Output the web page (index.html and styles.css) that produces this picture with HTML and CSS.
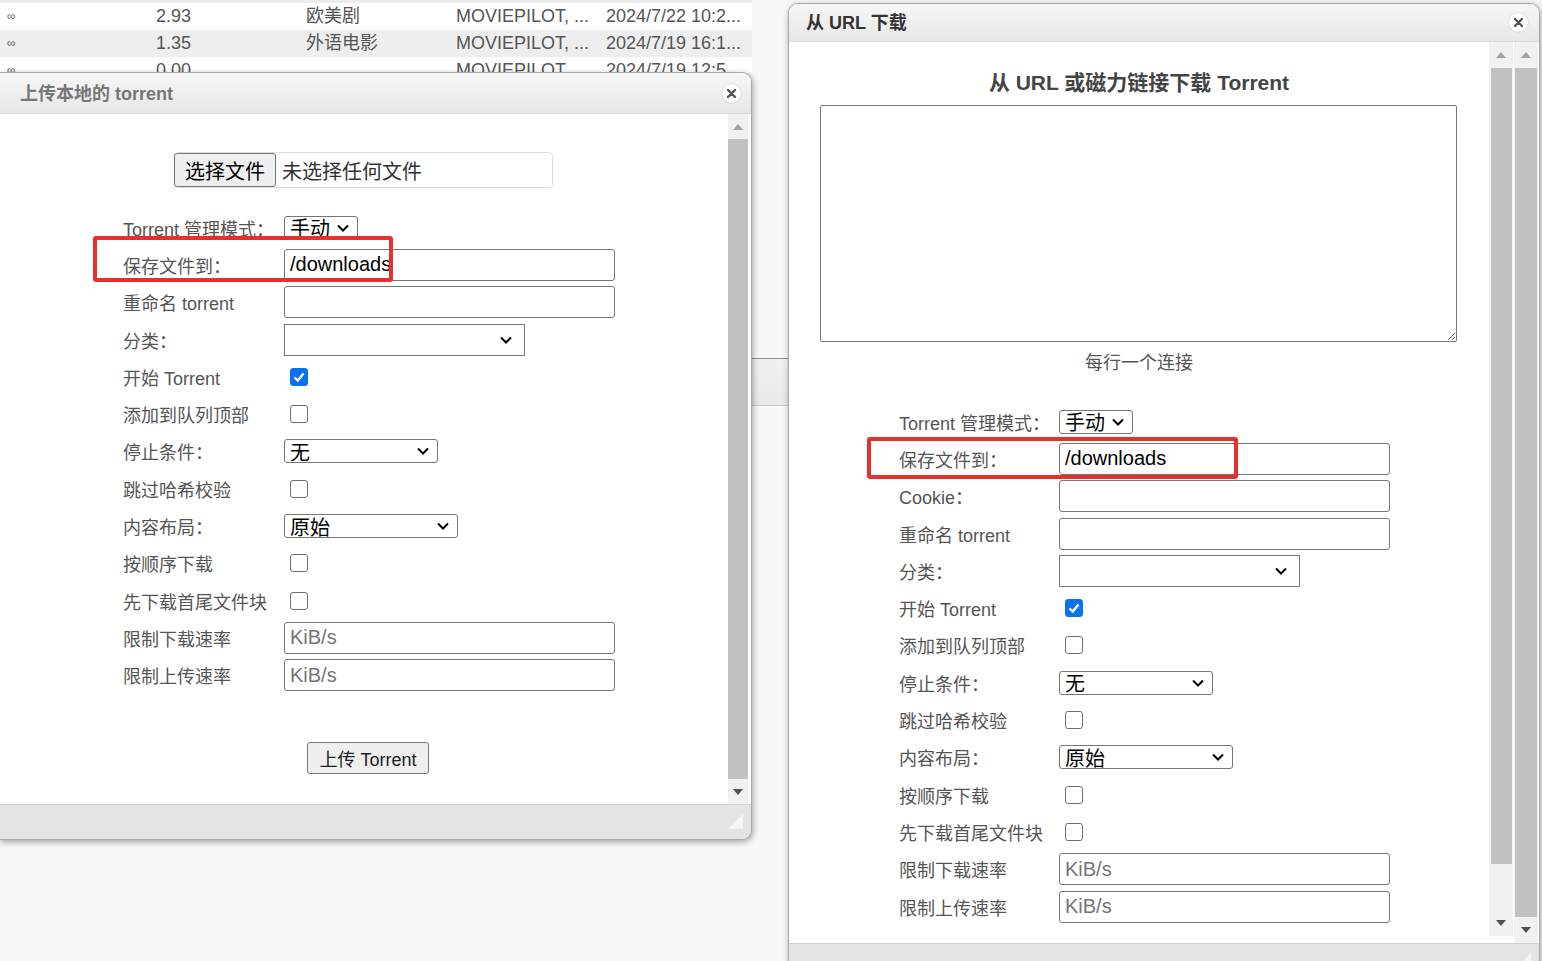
FILE: index.html
```html
<!DOCTYPE html>
<html lang="zh-CN">
<head>
  <meta charset="UTF-8" />
  <meta name="viewport" content="width=device-width, initial-scale=1" />
  <title>qBittorrent Web UI</title>
  <link rel="stylesheet" href="styles.css">
</head>
<body>
  <div class="left-col">
    <!-- daftar torrent di belakang dialog -->
    <div class="torrent-list">
      <div class="trow"><span class="inf">∞</span><span>2.93</span><span>欧美剧</span><span>MOVIEPILOT, ...</span><span>2024/7/22 10:2...</span></div>
      <div class="trow"><span class="inf">∞</span><span>1.35</span><span>外语电影</span><span>MOVIEPILOT, ...</span><span>2024/7/19 16:1...</span></div>
      <div class="trow"><span class="inf">∞</span><span>0.00</span><span></span><span>MOVIEPILOT, ...</span><span>2024/7/19 12:5...</span></div>
    </div>

    <div class="dialog dlg-upload">
      <div class="dlg-title">
        <span>上传本地的 torrent</span>
        <span class="close"><svg width="9" height="9" viewBox="0 0 9 9"><path d="M1 1L8 8M8 1L1 8" stroke="#555" stroke-width="2.4" stroke-linecap="round"/></svg></span>
      </div>
      <div class="dlg-body">
        <div class="dlg-main upload-main">
          <div class="file-pick">
            <button class="btn-file">选择文件</button>
            <span>未选择任何文件</span>
          </div>

          <div class="form">
            <div class="row"><label>Torrent 管理模式：</label><div class="sel w-mode"><span>手动</span><svg width="12" height="8" viewBox="0 0 12 8"><polyline points="1,1.5 6,6.5 11,1.5" fill="none" stroke="#000" stroke-width="2"/></svg></div></div>
            <div class="row"><label>保存文件到：</label><input class="txt" type="text" value="/downloads"></div>
            <div class="row"><label>重命名 torrent</label><input class="txt" type="text"></div>
            <div class="row"><label>分类：</label><div class="sel big w-cat"><span></span><svg width="12" height="8" viewBox="0 0 12 8"><polyline points="1,1.5 6,6.5 11,1.5" fill="none" stroke="#000" stroke-width="2"/></svg></div></div>
            <div class="row"><label>开始 Torrent</label><span class="cb on"><svg width="14" height="14" viewBox="0 0 14 14"><polyline points="2.5,7.5 5.8,10.6 11.5,3.5" fill="none" stroke="#fff" stroke-width="2.4"/></svg></span></div>
            <div class="row"><label>添加到队列顶部</label><span class="cb"></span></div>
            <div class="row"><label>停止条件：</label><div class="sel w-stop"><span>无</span><svg width="12" height="8" viewBox="0 0 12 8"><polyline points="1,1.5 6,6.5 11,1.5" fill="none" stroke="#000" stroke-width="2"/></svg></div></div>
            <div class="row"><label>跳过哈希校验</label><span class="cb"></span></div>
            <div class="row"><label>内容布局：</label><div class="sel w-layout"><span>原始</span><svg width="12" height="8" viewBox="0 0 12 8"><polyline points="1,1.5 6,6.5 11,1.5" fill="none" stroke="#000" stroke-width="2"/></svg></div></div>
            <div class="row"><label>按顺序下载</label><span class="cb"></span></div>
            <div class="row"><label>先下载首尾文件块</label><span class="cb"></span></div>
            <div class="row"><label>限制下载速率</label><input class="txt" type="text" placeholder="KiB/s"></div>
            <div class="row"><label>限制上传速率</label><input class="txt" type="text" placeholder="KiB/s"></div>
          </div>

          <button class="btn-upload">上传 Torrent</button>
        </div>
        <div class="vscroll sb-left">
          <span class="arr up"></span>
          <div class="thumb"></div>
          <span class="arr down"></span>
        </div>
        <div class="mark mark-left"></div>
      </div>
      <div class="dlg-foot"><span class="grip"></span></div>
    </div>
  </div>

  <div class="mid-col"><div class="band"></div></div>

  <div class="dialog dlg-url">
    <div class="dlg-title">
      <span>从 URL 下载</span>
      <span class="close"><svg width="9" height="9" viewBox="0 0 9 9"><path d="M1 1L8 8M8 1L1 8" stroke="#555" stroke-width="2.4" stroke-linecap="round"/></svg></span>
    </div>
    <div class="dlg-body">
      <div class="dlg-main url-main">
        <h2 class="url-head">从 URL 或磁力链接下载 Torrent</h2>
        <textarea class="urls"></textarea>
        <p class="hint">每行一个连接</p>

        <div class="form">
          <div class="row"><label>Torrent 管理模式：</label><div class="sel w-mode"><span>手动</span><svg width="12" height="8" viewBox="0 0 12 8"><polyline points="1,1.5 6,6.5 11,1.5" fill="none" stroke="#000" stroke-width="2"/></svg></div></div>
          <div class="row"><label>保存文件到：</label><input class="txt" type="text" value="/downloads"></div>
          <div class="row"><label>Cookie：</label><input class="txt" type="text"></div>
          <div class="row"><label>重命名 torrent</label><input class="txt" type="text"></div>
          <div class="row"><label>分类：</label><div class="sel big w-cat"><span></span><svg width="12" height="8" viewBox="0 0 12 8"><polyline points="1,1.5 6,6.5 11,1.5" fill="none" stroke="#000" stroke-width="2"/></svg></div></div>
          <div class="row"><label>开始 Torrent</label><span class="cb on"><svg width="14" height="14" viewBox="0 0 14 14"><polyline points="2.5,7.5 5.8,10.6 11.5,3.5" fill="none" stroke="#fff" stroke-width="2.4"/></svg></span></div>
          <div class="row"><label>添加到队列顶部</label><span class="cb"></span></div>
          <div class="row"><label>停止条件：</label><div class="sel w-stop"><span>无</span><svg width="12" height="8" viewBox="0 0 12 8"><polyline points="1,1.5 6,6.5 11,1.5" fill="none" stroke="#000" stroke-width="2"/></svg></div></div>
          <div class="row"><label>跳过哈希校验</label><span class="cb"></span></div>
          <div class="row"><label>内容布局：</label><div class="sel w-layout"><span>原始</span><svg width="12" height="8" viewBox="0 0 12 8"><polyline points="1,1.5 6,6.5 11,1.5" fill="none" stroke="#000" stroke-width="2"/></svg></div></div>
          <div class="row"><label>按顺序下载</label><span class="cb"></span></div>
          <div class="row"><label>先下载首尾文件块</label><span class="cb"></span></div>
          <div class="row"><label>限制下载速率</label><input class="txt" type="text" placeholder="KiB/s"></div>
          <div class="row"><label>限制上传速率</label><input class="txt" type="text" placeholder="KiB/s"></div>
        </div>
      </div>
      <div class="vscroll sb-inner">
        <span class="arr up"></span>
        <div class="thumb"></div>
        <div class="fill"></div>
        <span class="arr down"></span>
      </div>
      <div class="vscroll sb-outer">
        <span class="arr up"></span>
        <div class="thumb"></div>
        <span class="arr down"></span>
      </div>
      <div class="mark mark-right"></div>
    </div>
    <div class="dlg-foot"><span class="grip"></span></div>
  </div>
</body>
</html>
```

FILE: styles.css
```css
* {
  box-sizing: border-box;
}

html, body {
  margin: 0;
}

body {
  width: 1542px;
  height: 961px;
  overflow: hidden;
  display: flex;
  align-items: flex-start;
  background: #f7f7f7;
  font-family: "Liberation Sans", "Noto Sans CJK SC", Arial, sans-serif;
  color: #555;
}

/* kolom kiri: daftar + dialog upload */
.left-col {
  width: 752px;
  flex: none;
}

.torrent-list {
  height: 72px;
  overflow: hidden;
  border-top: 3px solid #ececec;
  background: #fff;
}

.trow {
  display: grid;
  grid-template-columns: 156px 150px 150px 150px 146px;
  height: 27px;
  line-height: 27px;
  font-size: 18px;
  color: #555;
  white-space: nowrap;
}

.trow span {
  overflow: hidden;
}

.trow:nth-child(even) {
  background: #eee;
}

.trow .inf {
  padding-left: 7px;
  font-size: 12px;
  color: #666;
}

.mid-col {
  width: 36px;
  flex: none;
  padding-top: 358px;
}

.band {
  height: 48px;
  border-top: 1px solid #8f8f8f;
  border-bottom: 1px solid #c8c8c8;
  background: linear-gradient(#f1f1f1, #e9e9e9);
}

/* dialog */
.dialog {
  background: #fff;
  border: 1px solid #a8a8a8;
  box-shadow: 1px 2px 6px rgba(0, 0, 0, 0.35);
  display: flex;
  flex-direction: column;
  overflow: hidden;
  position: relative;
  z-index: 2;
}

.dlg-upload {
  width: 752px;
  border-left: 0;
  border-radius: 0 10px 10px 0;
}

.dlg-url {
  width: 752px;
  height: 975px;
  flex: none;
  margin-top: 3px;
  border-radius: 10px 10px 0 0;
}

.dlg-title {
  flex: none;
  display: flex;
  align-items: center;
  justify-content: space-between;
  background: linear-gradient(#f7f7f7, #e7e7e7);
  border-bottom: 1px solid #d8d8d8;
  font-weight: bold;
}

.dlg-title > span:first-child {
  padding-bottom: 3px;
}

.dlg-upload .dlg-title {
  height: 41px;
  padding: 0 10px 0 20px;
  font-size: 18px;
  color: #777;
}

.dlg-url .dlg-title {
  height: 38px;
  padding: 0 11px 0 17px;
  font-size: 18px;
  color: #333;
}

.close {
  width: 19px;
  height: 19px;
  border-radius: 50%;
  background: #fff;
  display: flex;
  align-items: center;
  justify-content: center;
  box-shadow: 0 0 2px rgba(0, 0, 0, 0.2);
}

.dlg-body {
  flex: none;
  display: flex;
  position: relative;
}

.dlg-upload .dlg-body {
  height: 690px;
  padding-right: 3px;
}

.dlg-url .dlg-body {
  height: 901px;
  padding-right: 1px;
}

.dlg-main {
  flex: 1;
  overflow: hidden;
}

/* scrollbar */
.vscroll {
  flex: none;
  display: flex;
  flex-direction: column;
  background: #f1f1f1;
}

.arr {
  flex: none;
  height: 25px;
  display: flex;
  align-items: center;
  justify-content: center;
}

.arr::before {
  content: "";
  border-left: 5px solid transparent;
  border-right: 5px solid transparent;
}

.arr.up::before {
  border-bottom: 6px solid #a3a3a3;
}

.arr.down::before {
  border-top: 6px solid #505050;
}

.thumb {
  background: #c1c1c1;
}

.fill {
  flex: 1;
}

.sb-left {
  width: 20px;
}

.sb-left .thumb {
  height: 640px;
}

.sb-inner {
  width: 24px;
  margin-bottom: 7px;
}

.sb-inner .arr {
  height: 26px;
}

.sb-inner .thumb {
  height: 796px;
  margin: 0 1px 0 2px;
}

.sb-outer {
  width: 24px;
  margin-left: 1px;
}

.sb-outer .arr {
  height: 26px;
}

.sb-outer .thumb {
  height: 849px;
  margin: 0 1px 0 1px;
}

.dlg-foot {
  flex: none;
  height: 35px;
  background: #e4e4e4;
  border-top: 1px solid #d2d2d2;
  display: flex;
  justify-content: flex-end;
  align-items: flex-end;
  padding: 0 8px 10px 0;
}

.grip {
  width: 0;
  height: 0;
  border-left: 15px solid transparent;
  border-bottom: 15px solid #f4f4f4;
}

/* isi dialog upload */
.upload-main {
  padding-top: 38px;
}

.file-pick {
  display: flex;
  align-items: center;
  width: 379px;
  height: 36px;
  margin-left: 174px;
  border: 1px solid #ddd;
  border-radius: 4px;
  font-size: 20px;
  color: #333;
}

.btn-file {
  height: 34px;
  margin-left: -1px;
  padding: 0 10px;
  background: #efefef;
  border: 1px solid #767676;
  border-radius: 3px;
  font: 20px "Liberation Sans", "Noto Sans CJK SC", sans-serif;
  color: #000;
}

.file-pick span {
  margin-left: 6px;
}

.upload-main .form {
  margin: 21px 0 0 123px;
}

.btn-upload {
  display: block;
  margin: 48px 0 0 307px;
  width: 122px;
  height: 32px;
  background: #efefef;
  border: 1px solid #767676;
  border-radius: 3px;
  font: 18px "Liberation Sans", "Noto Sans CJK SC", sans-serif;
  color: #222;
}

/* isi dialog url */
.url-main {
  padding-top: 29px;
}

.url-head {
  margin: 0;
  text-align: center;
  font-size: 21px;
  line-height: 24px;
  color: #444;
}

.urls {
  display: block;
  margin: 10px 0 0 31px;
  width: 637px;
  height: 237px;
  border: 1px solid #767676;
  border-radius: 2px;
  resize: both;
}

.hint {
  margin: 10px 0 0;
  text-align: center;
  font-size: 18px;
  line-height: 22px;
  color: #555;
}

.url-main .form {
  margin: 29px 0 0 110px;
}

/* baris formulir */
.row {
  display: flex;
  align-items: center;
  height: 37.3px;
}

.row label {
  width: 161px;
  flex: none;
  font-size: 18px;
  color: #555;
  white-space: nowrap;
}

.url-main .row label {
  width: 160px;
}

.txt {
  width: 331px;
  height: 32px;
  border: 1px solid #767676;
  border-radius: 3px;
  padding: 0 5px;
  font: 20px "Liberation Sans", "Noto Sans CJK SC", sans-serif;
  color: #000;
  background: #fff;
}

.txt::placeholder {
  color: #757575;
}

.sel {
  display: flex;
  align-items: center;
  justify-content: space-between;
  height: 24px;
  padding: 0 8px 0 5px;
  border: 1px solid #767676;
  border-radius: 3px;
  background: #fff;
  font-size: 20px;
  color: #000;
}

.sel.big {
  height: 32px;
  border-radius: 0;
  padding-right: 12px;
}

.w-mode { width: 74px; }
.w-cat { width: 241px; }
.w-stop { width: 154px; }
.w-layout { width: 174px; }

.cb {
  width: 18px;
  height: 18px;
  margin-left: 6px;
  border: 1.5px solid #6f6f6f;
  border-radius: 3px;
  background: #fff;
  display: flex;
  align-items: center;
  justify-content: center;
}

.cb.on {
  background: #0b72ef;
  border-color: #0b72ef;
}

/* penanda merah */
.mark {
  position: absolute;
  border: 4px solid #e8302a;
  border-radius: 3px;
}

.mark-left {
  left: 93px;
  top: 122px;
  width: 300px;
  height: 46px;
}

.mark-right {
  left: 78px;
  top: 395px;
  width: 371px;
  height: 42px;
}
```
